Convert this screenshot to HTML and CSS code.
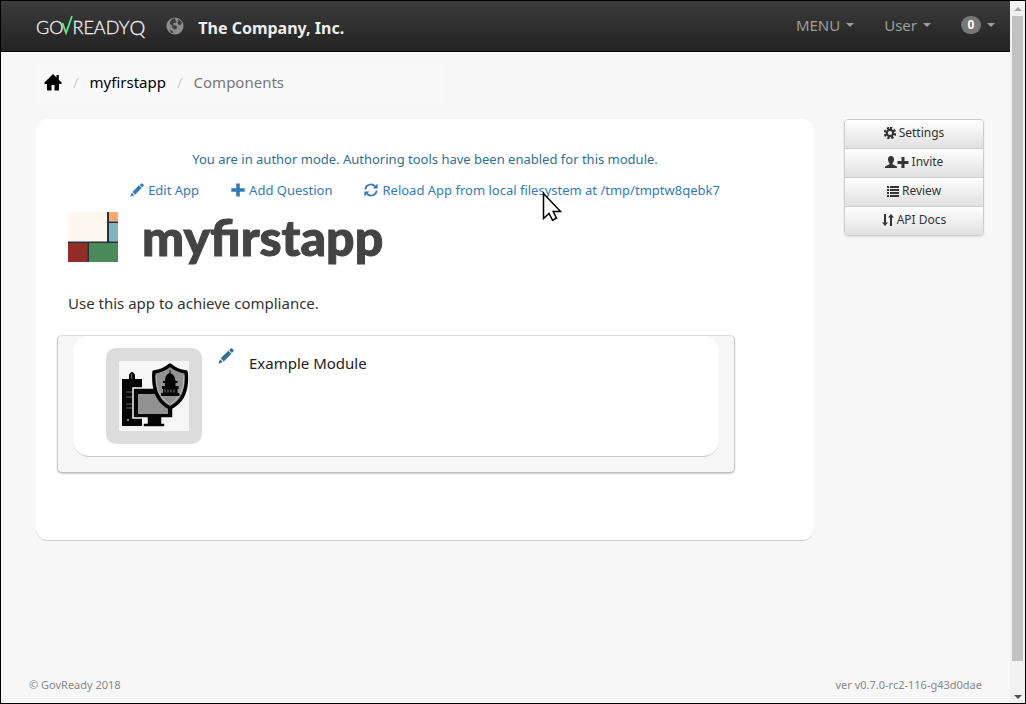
FILE: index.html
```html
<!DOCTYPE html>
<html lang="en">
<head>
<meta charset="utf-8">
<meta name="viewport" content="width=device-width, initial-scale=1">
<title>myfirstapp - GovReady-Q</title>
<link rel="stylesheet" href="styles.css">
</head>
<body>
<svg class="symbols" aria-hidden="true">
  <symbol id="pencil" viewBox="0 0 16 16"><path d="M11.2 2.2 12.8.6q.6-.6 1.2 0l1.5 1.5q.6.6 0 1.2l-1.6 1.6zM10.3 2.700l3.100 3.100-7.600 7.600-3.100-3.100zM2 11.2l2.900 2.900L.3 15.7z"/></symbol>
  <symbol id="caret" viewBox="0 0 8 4"><path d="M0 0h8L4 4z"/></symbol>
</svg>
<div class="window">
  <div class="page">
    <header class="navbar">
      <a class="logo" href="#" aria-label="GovReady-Q"><span>GO</span><svg class="check" viewBox="0 0 12 20"><path d="M1.5 8 5 18 11 1" fill="none" stroke="#5fe388" stroke-width="1.8"/></svg><span>READY</span><span class="logo-q">Q</span></a>
      <svg class="globe" viewBox="0 0 18 18"><circle cx="9" cy="9" r="8.6" fill="#8d8d8d"/><path d="M9 1.200 6 2 4.200 4.500 4 7l2 1.500L6.500 11l2 1.500 2-.5.5-2.500L9 8.200 7.500 8.500 7 6.800l1.500-1L10 6l.5-1.800L9.200 3zM12 2l2.500 1.800L16 6l-1.500 2L12 7.500 11.500 5l1-1zM3.500 12.500l3 1.500 1 2.600-2.500-1.200z" fill="#3d3d3d"/></svg>
      <a class="company" href="#">The Company, Inc.</a>
      <nav class="menus">
        <button type="button">MENU <svg class="caret"><use href="#caret"/></svg></button>
        <button type="button">User <svg class="caret"><use href="#caret"/></svg></button>
        <button type="button" aria-label="Notifications"><span class="badge">0</span><svg class="caret"><use href="#caret"/></svg></button>
      </nav>
    </header>

    <div class="content">
      <nav class="breadcrumb" aria-label="Breadcrumb">
        <a href="#" aria-label="Home"><svg class="home" viewBox="0 0 18 17"><path d="M9 0l3.5 3.5V1h2.3v4.8L18 9l-1 1h-2v6.5h-4.500V11h-3v5.500H3V10H1L0 9z"/></svg></a>
        <span class="slash">/</span>
        <a href="#">myfirstapp</a>
        <span class="slash">/</span>
        <span class="current">Components</span>
      </nav>

      <div class="columns">
        <main class="card">
          <p class="author">You are in author mode. Authoring tools have been enabled for this module.</p>
          <div class="tools">
            <a href="#"><svg class="icon"><use href="#pencil"/></svg>Edit App</a>
            <a href="#"><svg class="icon" viewBox="0 0 14 14"><path d="M5.200.500h3.600v4.700h4.900v3.600H8.800v4.700H5.200V8.800H.300V5.200h4.900z"/></svg>Add Question</a>
            <a class="reload" href="#"><svg class="icon" viewBox="0 0 14 14"><path d="M1.300 6.500A5.600 5.600 0 0 1 11 3.300M12.700 7.500A5.600 5.600 0 0 1 3 10.700" fill="none" stroke="currentColor" stroke-width="1.800"/><path d="M13.600.500v5H8.600zM.4 13.500V8.500h5z"/></svg>Reload App from local filesystem at /tmp/tmptw8qebk7<svg class="cursor" viewBox="0 0 20 30"><path d="M1.500 1.500v25l5.500-5 3.500 6.700 4-2-3.300-6.700h7.300z" fill="#fff" stroke="#000" stroke-width="1.500"/></svg></a>
          </div>
          <div class="title">
            <svg class="app-logo" viewBox="0 0 50 50"><path fill="#263238" d="M0 0h50v50H0z"/><path fill="#fff8f0" d="M0 0h39v29.500H0z"/><path fill="#ffa869" d="M41 0h9v9.500h-9z"/><path fill="#7fb5c1" d="M41 11h9v18.500h-9z"/><path fill="#912c28" d="M0 31h19.500v19H0z"/><path fill="#4b8b5b" d="M21 31h29v19H21z"/></svg>
            <h1>myfirstapp</h1>
          </div>
          <p class="desc">Use this app to achieve compliance.</p>
          <section class="group">
            <div class="module">
              <div class="tile">
                <svg viewBox="0 0 70 70">
                  <path fill="#f6f6f6" d="M0 0h70v70H0z"/>
                  <path d="M3 18h7v-4q1-3 3-3t3 3v4h7v47H3z"/><path d="M12.500 13v5" stroke="#666"/>
                  <path d="M7 31h6M7 36h6M7 43h6M7 47h6" stroke="#777" stroke-width=".8"/><circle cx="9" cy="59" r="1" fill="#aaa"/>
                  <path d="M14 27h40v30H43v5h3v4H24v-4h4v-5H14z" stroke="#f6f6f6" stroke-width="1.500"/>
                  <path fill="#929292" d="M19 33h30v20H19z"/>
                  <path d="M51 4q7 6 16 7 3 27-16 36Q33 38 35 11q9-1 16-7z" fill="#929292" stroke="#000" stroke-width="3.500" stroke-linejoin="round"/>
                  <path d="M37 14q-1 20 13 29M65 14q1 19-13 29" fill="none" stroke="#d5d5d5" stroke-width=".7"/>
                  <path d="M50.500 9h1v3q4 2 5 7v1h2v2h-2v3h3v3h-1v4h2v3H42v-3h2v-4h-1v-3h3v-3h-2v-2h2v-1q0-5 4.500-7z"/>
                  <path d="M46 28.500v3M49 28.500v3M52 28.500v3M55 28.500v3" stroke="#929292" stroke-width=".8"/>
                </svg>
              </div>
              <a class="edit" href="#" aria-label="Edit module"><svg viewBox="0 0 16 16"><use href="#pencil"/></svg></a>
              <a class="module-name" href="#">Example Module</a>
            </div>
          </section>
        </main>

        <aside class="side">
          <button type="button"><svg width="12" height="12" viewBox="0 0 12 12"><path fill="none" stroke="currentColor" stroke-width="2.600" stroke-dasharray="2.200 1.730" d="M6 1a5 5 0 1 1 0 10A5 5 0 0 1 6 1"/><circle cx="6" cy="6" r="3.200" fill="none" stroke="currentColor" stroke-width="2.200"/></svg>Settings</button>
          <button type="button"><svg width="24" height="12" viewBox="0 0 24 12"><path d="M6 0q3 0 3 3.500Q9 6 7.500 7v1.300L12 10.500V12H0v-1.500l4.500-2.200V7Q3 6 3 3.500 3 0 6 0zM16.500 1h3v4H23.500v3h-4v4h-3V8h-4V5h4z"/></svg>Invite</button>
          <button type="button"><svg width="12" height="12" viewBox="0 0 12 12"><path d="M0 1h2v2H0zM3 1h9v2H3zM0 4h2v2H0zM3 4h9v2H3zM0 7h2v2H0zM3 7h9v2H3zM0 10h2v2H0zM3 10h9v2H3z"/></svg>Review</button>
          <button type="button"><svg width="12" height="12" viewBox="0 0 12 12"><path d="M2 0h2v8.500h2L3 12 0 8.500h2zM8 12h2V3.500h2L9 0 6 3.500h2z"/></svg>API Docs</button>
        </aside>
      </div>
    </div>

    <footer class="footer"><span>© GovReady 2018</span><span>ver v0.7.0-rc2-116-g43d0dae</span></footer>
  </div>
  <div class="scrollbar" aria-hidden="true">
    <svg class="arrow up" viewBox="0 0 8 4"><path d="M0 4h8L4 0z"/></svg>
    <div class="thumb"></div>
    <svg class="arrow" viewBox="0 0 8 4"><use href="#caret"/></svg>
  </div>
</div>
</body>
</html>
```

FILE: styles.css
```css
* { box-sizing: border-box; }
body { margin: 0; background: #f7f7f7; color: #333; font: 15px/20px "Noto Sans", sans-serif; }
a { color: inherit; text-decoration: none; }
p, h1 { margin: 0; }
svg { display: block; flex: none; fill: currentColor; }
button { font: inherit; color: inherit; cursor: pointer; }
.symbols { display: none; }

.window { display: flex; min-height: 100vh; border: 1px solid #000; }
.page { flex: 1; display: flex; flex-direction: column; }

.navbar { display: flex; align-items: center; height: 51px; padding: 0 15px 0 35px; background: linear-gradient(#3c3c3c, #222); border-bottom: 1px solid #080808; }
.logo { display: flex; align-items: center; padding-top: 2px; color: #f4f4f4; font: 400 18px/24px Lato, sans-serif; }
.logo span { font-weight: 300; -webkit-text-stroke: 0.3px #f4f4f4; }
.logo-q { font-size: 20px; }
.check { width: 12px; height: 20px; margin: 0 -1px 4px -2px; }
.globe { width: 18px; height: 18px; margin: 0 14px 0 21px; }
.company { padding-top: 4px; color: #eee; font-size: 16px; font-weight: 700; }
.menus { display: flex; gap: 30px; margin-left: auto; padding-bottom: 2px; }
.menus button { display: flex; align-items: center; gap: 6px; padding: 0; border: 0; background: none; color: #9d9d9d; }
.caret { width: 8px; height: 4px; }
.badge { min-width: 20px; padding: 0 6px; border-radius: 10px; background: #777; color: #fff; font-size: 12px; font-weight: 700; line-height: 18px; text-align: center; }

.content { padding: 12px 26px 0 35px; }
.breadcrumb { display: flex; align-items: center; gap: 11px; width: 43%; height: 40px; padding: 0 8px 4px; border-radius: 4px; background: #f9f9f9; color: #000; }
.home { width: 18px; height: 17px; }
.slash { color: #ccc; }
.current { color: #777; }

.columns { display: grid; grid-template-columns: 1fr 140px; gap: 30px; align-items: start; margin-top: 15px; }
.card { padding: 30px 32px 67px; border-bottom: 1px solid #ccc; border-radius: 12px; background: #fff; }
.author { color: #31708f; font-size: 13px; text-align: center; }
.tools { display: flex; justify-content: center; gap: 32px; margin-top: 11px; color: #337ab7; font-size: 13px; }
.tools a { display: flex; align-items: center; gap: 4px; }
.icon { width: 14px; height: 14px; }
.reload { position: relative; }
.cursor { position: absolute; left: 50%; top: 12px; width: 20px; height: 30px; }
.title { display: flex; align-items: center; gap: 24px; margin-top: 12px; }
.app-logo { width: 50px; height: 50px; }
h1 { color: #444; font: 900 50px/50px "Lato Black", Lato, sans-serif; -webkit-text-stroke: 1px #444; }
.desc { margin-top: 31px; }
.group { margin: 22px 47px 0 -11px; padding: 0 15px 15px; border: 1px solid #ccc; border-top-color: #ddd; border-bottom-color: #bbb; border-radius: 5px; background: #f6f6f6; box-shadow: 0 1px 2px rgba(0, 0, 0, .2); }
.module { display: flex; align-items: flex-start; padding: 12px 33px; border-bottom: 1px solid #ccc; border-radius: 16px; background: #fff; }
.tile { padding: 13px; border-radius: 10px; background: #dcdcdc; }
.tile svg { width: 70px; height: 70px; color: #050505; }
.edit { margin: 0 15px 0 16px; color: #31708f; }
.edit svg { width: 16px; height: 16px; }
.module-name { margin-top: 5px; color: #222; }

.side { display: flex; flex-direction: column; overflow: hidden; border: 1px solid #ccc; border-radius: 4px; box-shadow: 0 1px 2px rgba(0, 0, 0, .1); }
.side button { display: flex; align-items: center; justify-content: center; gap: 3px; height: 28px; padding: 0 0 2px; border: 0; background: linear-gradient(#fff, #e0e0e0); font-size: 12px; }
.side button + button { height: 29px; border-top: 1px solid #ccc; }

.footer { display: flex; justify-content: space-between; margin-top: auto; padding: 0 28px 8px; color: #888; font-size: 11px; }
.scrollbar { display: flex; flex-direction: column; align-items: center; width: 15px; padding: 6px 0 4px; background: #f1f1f1; }
.arrow { width: 8px; height: 4px; color: #505050; }
.arrow.up { color: #a3a3a3; }
.thumb { flex: 1; width: 11px; margin: 5px 0 34px; background: #c1c1c1; }
```
